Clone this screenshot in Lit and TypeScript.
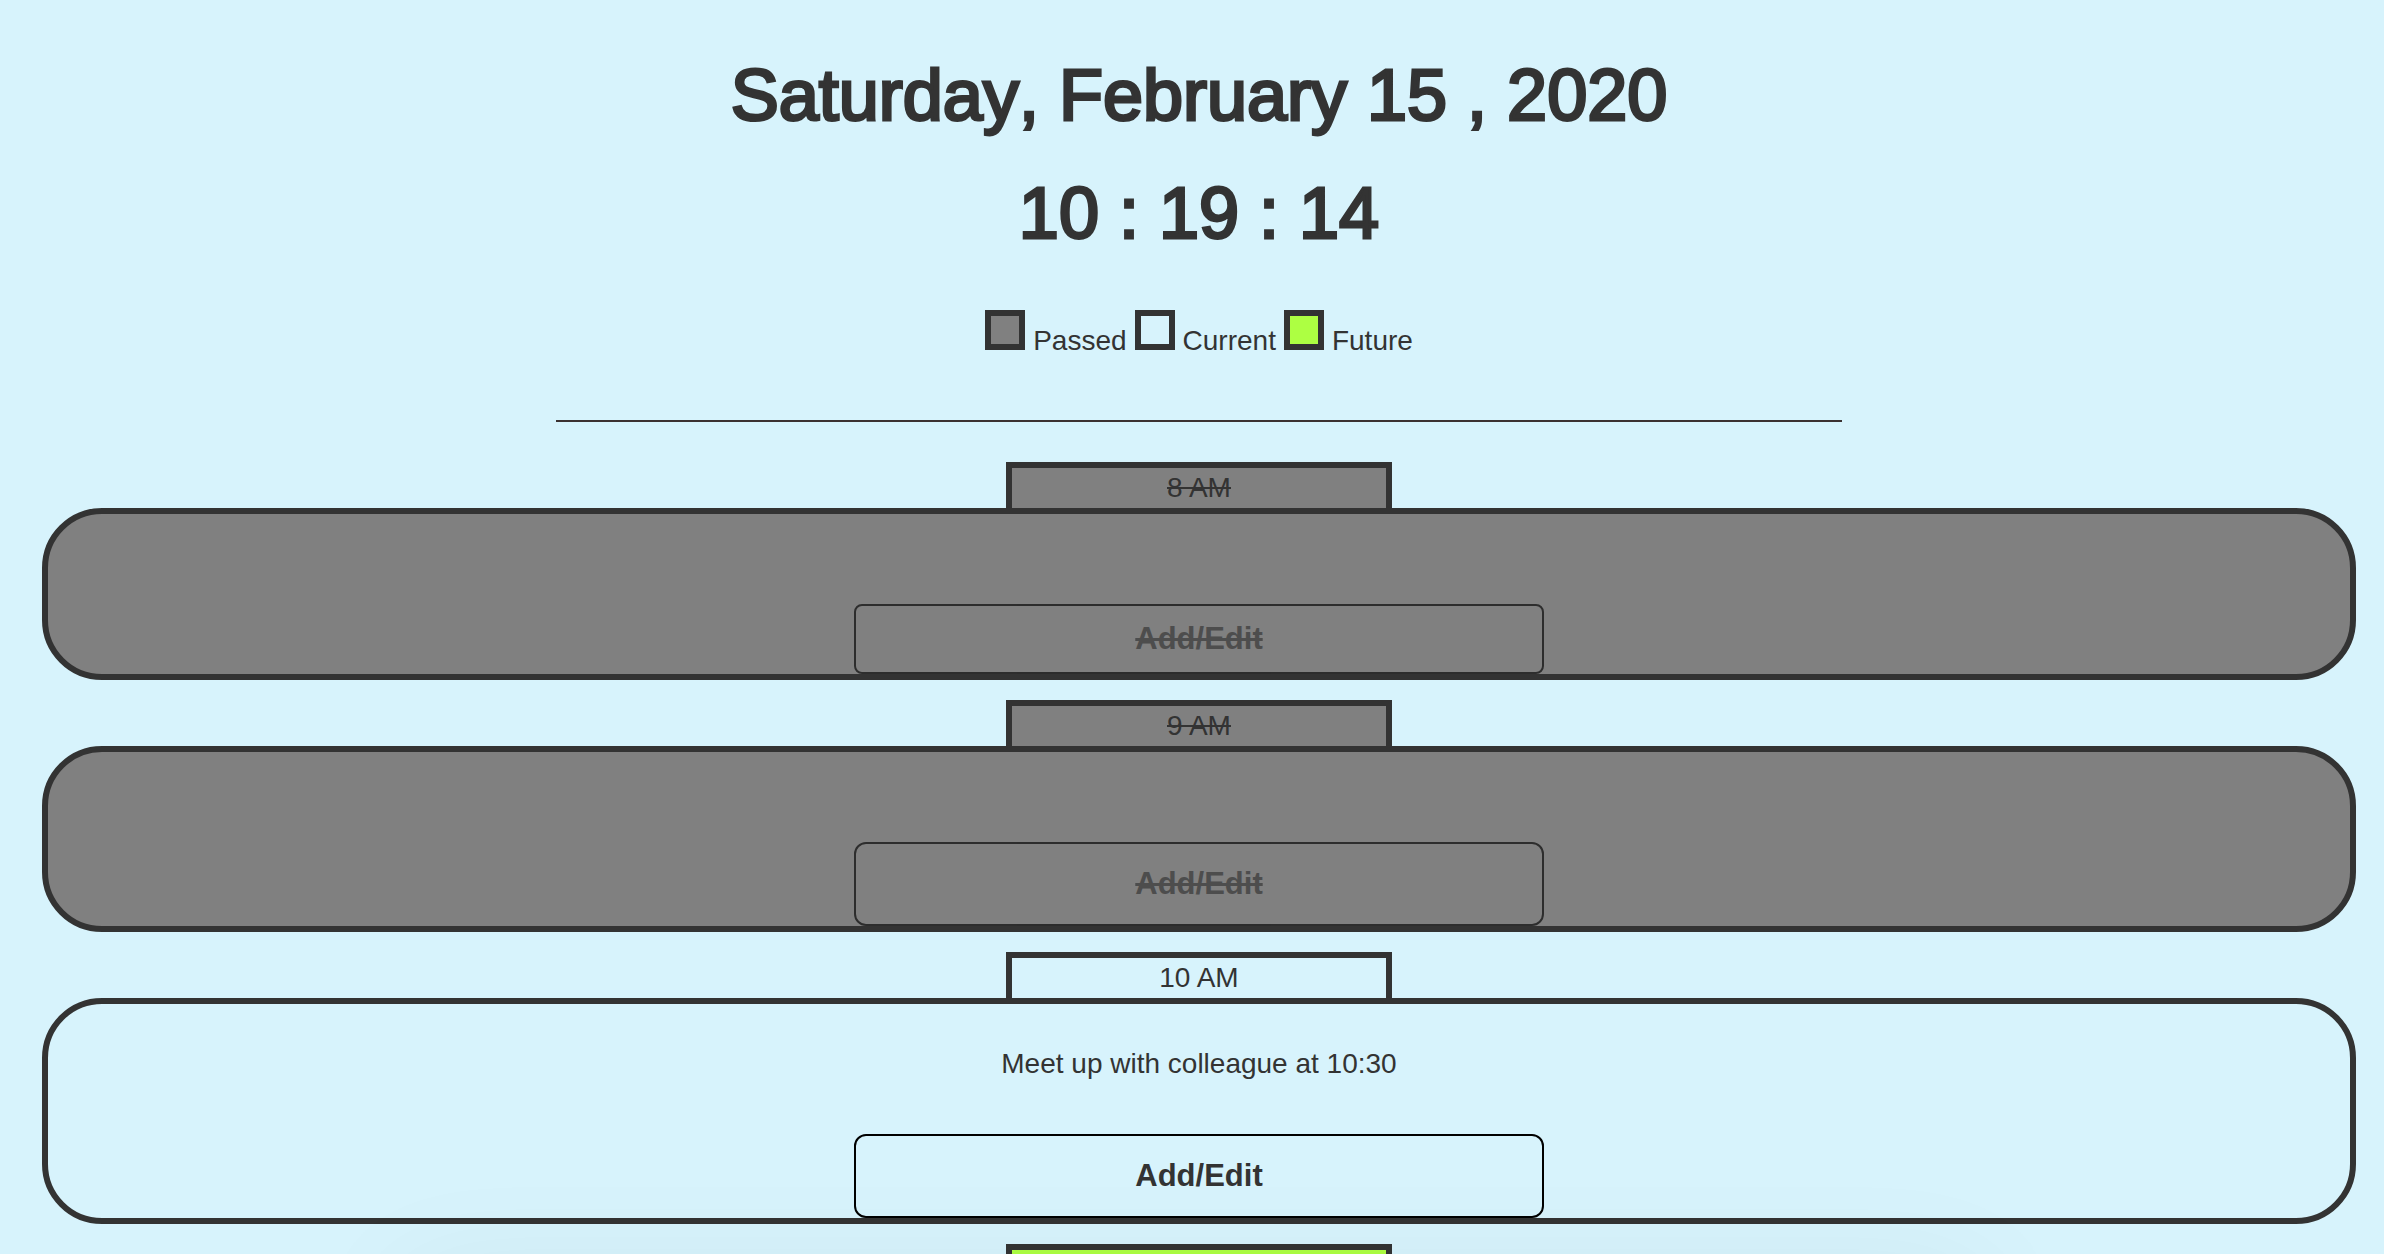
import { LitElement, html, css, nothing } from "lit";
import { customElement, property } from "lit/decorators.js";

type Phase = "passed" | "current" | "future";

interface Slot {
  hour: string;
  task: string;
  phase: Phase;
  compact?: boolean;
}

const SLOTS: Slot[] = [
  { hour: "8 AM", task: "", phase: "passed", compact: true },
  { hour: "9 AM", task: "", phase: "passed" },
  { hour: "10 AM", task: "Meet up with colleague at 10:30", phase: "current" },
  { hour: "", task: "", phase: "future" },
];

const LEGEND: { phase: Phase; label: string }[] = [
  { phase: "passed", label: "Passed" },
  { phase: "current", label: "Current" },
  { phase: "future", label: "Future" },
];

@customElement("hour-slot")
export class HourSlot extends LitElement {
  @property() hour = "";
  @property() task = "";
  @property() phase: Phase = "future";
  @property({ type: Boolean }) compact = false;

  static styles = css`
    :host {
      display: block;
    }
    .slot {
      --fill: transparent;
      display: flex;
      flex-direction: column;
      align-items: center;
    }
    .passed {
      --fill: #808080;
      text-decoration: line-through;
    }
    .future {
      --fill: #adff42;
    }
    .tab {
      box-sizing: border-box;
      width: 16.6667%;
      min-height: 46px;
      margin: 0;
      border: 6px solid #333;
      border-bottom: 0;
      background: var(--fill);
      font-size: 28px;
      font-weight: 400;
      line-height: 40px;
      text-align: center;
      text-decoration: inherit;
    }
    .body {
      box-sizing: border-box;
      display: flex;
      flex-direction: column;
      align-items: center;
      width: 100%;
      border: 6px solid #333;
      border-radius: 60px;
      background: var(--fill);
    }
    .task {
      margin: 40px 0 50px;
      line-height: 40px;
    }
    .edit {
      box-sizing: border-box;
      width: 30%;
      padding: 20px 24px;
      border: 2px solid #000;
      border-radius: 12px;
      background: transparent;
      color: #333;
      font: 700 31px/40px "Liberation Sans", Arial, sans-serif;
      text-decoration: inherit;
      cursor: pointer;
    }
    .edit.compact {
      padding-block: 13px;
      border-radius: 8px;
    }
    .edit:disabled {
      opacity: 0.65;
      cursor: default;
    }
  `;

  render() {
    return html`
      <section class="slot ${this.phase}">
        <h2 class="tab">${this.hour || nothing}</h2>
        <div class="body">
          <p class="task">${this.task || nothing}</p>
          ${this.hour
            ? html`<button
                class="edit ${this.compact ? "compact" : ""}"
                type="button"
                ?disabled=${this.phase === "passed"}
              >
                Add/Edit
              </button>`
            : nothing}
        </div>
      </section>
    `;
  }
}

@customElement("app-root")
export class AppRoot extends LitElement {
  static styles = css`
    :host {
      display: block;
      color: #333;
      font: 28px/40px "Liberation Sans", Arial, sans-serif;
    }
    .page {
      position: relative;
      box-sizing: border-box;
      height: 100vh;
      overflow: hidden;
      padding: 52px 28px 0 42px;
      background: #d7f3fc;
    }
    .page::after {
      content: "";
      position: absolute;
      left: 400px;
      right: 400px;
      top: calc(100% + 20px);
      height: 200px;
      box-shadow: 0 0 120px rgba(0, 0, 0, 0.06);
      pointer-events: none;
    }
    .head {
      display: flex;
      flex-direction: column;
      align-items: center;
    }
    .title {
      margin: 0 0 32px;
      font-size: 72px;
      font-weight: 400;
      font-kerning: none;
      line-height: 86px;
      text-align: center;
      -webkit-text-stroke: 3px #333;
    }
    .legend {
      display: flex;
      gap: 8px;
      margin: 22px 0 59px;
      padding: 0;
      list-style: none;
    }
    .key {
      display: flex;
      align-items: baseline;
      gap: 8px;
    }
    .swatch {
      box-sizing: border-box;
      width: 40px;
      height: 40px;
      border: 6px solid #333;
    }
    .swatch.passed {
      background: #808080;
    }
    .swatch.future {
      background: #adff42;
    }
    .rule {
      width: 55.5556%;
      height: 2px;
      margin: 0 0 40px;
      border: 0;
      background: #3b3131;
    }
    .slots {
      display: flex;
      flex-direction: column;
      gap: 20px;
    }
  `;

  render() {
    return html`
      <main class="page">
        <header class="head">
          <h1 class="title">Saturday, February 15 , 2020</h1>
          <div class="title" role="timer">10 : 19 : 14</div>
          <ul class="legend">
            ${LEGEND.map(
              (k) => html`<li class="key">
                <span class="swatch ${k.phase}"></span><span>${k.label}</span>
              </li>`
            )}
          </ul>
          <hr class="rule" />
        </header>
        <div class="slots">
          ${SLOTS.map(
            (s) => html`<hour-slot
              .hour=${s.hour}
              .task=${s.task}
              .phase=${s.phase}
              .compact=${s.compact ?? false}
            ></hour-slot>`
          )}
        </div>
      </main>
    `;
  }
}
